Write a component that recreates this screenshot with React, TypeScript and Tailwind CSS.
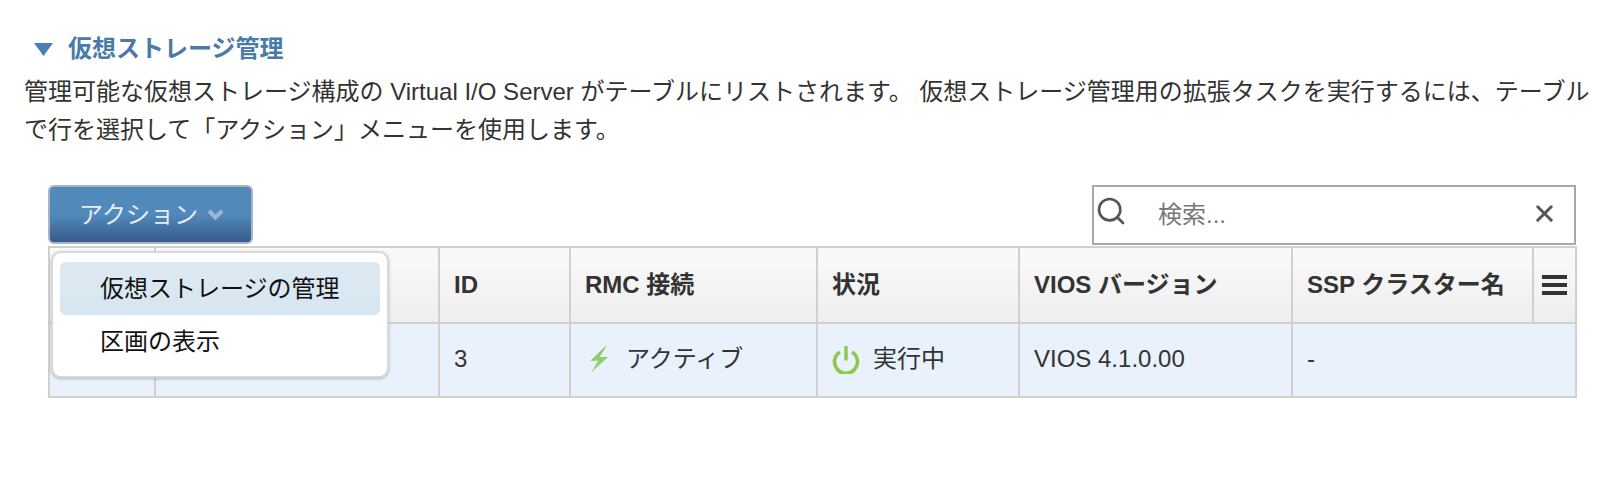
import React from 'react';
import { Search, X } from 'lucide-react';

const font = '[font-family:"Liberation_Sans","Noto_Sans_CJK_JP",sans-serif]';

const headers = [
  { label: '', width: 'w-[106px]' },
  { label: '', width: 'w-[284px]' },
  { label: 'ID', width: 'w-[131px]' },
  { label: 'RMC 接続', width: 'w-[247px]' },
  { label: '状況', width: 'w-[202px]' },
  { label: 'VIOS バージョン', width: 'w-[273px]' },
  { label: 'SSP クラスター名', width: 'w-[241px]' },
];

const Bolt = () => (
  <svg width="20" height="28" viewBox="0 0 20 28" className="shrink-0">
    <defs>
      <linearGradient id="bolt" x1="0" y1="0" x2="0" y2="1">
        <stop offset="0%" stopColor="#7cc04a" />
        <stop offset="100%" stopColor="#a6d98a" />
      </linearGradient>
    </defs>
    <path d="M18 0 L1 16 L9 15.5 L2 28 L19 12 L10.5 12 Z" fill="url(#bolt)" />
  </svg>
);

const PowerOn = () => (
  <svg width="28" height="29" viewBox="0 0 28 29" fill="none" className="shrink-0">
    <path d="M8 7 A11.5 11.5 0 1 0 20 7" stroke="#8cc84b" strokeWidth="3.6" />
    <path d="M14 1 V15.5" stroke="#8cc84b" strokeWidth="3.4" />
  </svg>
);

const Cell: React.FC<{ children?: React.ReactNode; span?: number }> = ({ children, span }) => (
  <td colSpan={span} className="border-2 border-[#d0d0d0] px-[14px] pb-[2px] text-[#333] text-[24px] h-[74px]">{children}</td>
);

export default function App() {
  return (
    <div className={`${font} bg-white w-[1613px] h-[480px] pt-[33px] pl-[24px] overflow-hidden`}>
      <div className="flex items-center h-[32px] pl-[10px]">
        <svg width="19" height="13" viewBox="0 0 19 13" className="mr-[15px]">
          <path d="M0 0 H19 L9.5 13 Z" fill="#4681b4" />
        </svg>
        <h2 className="text-[24px] font-bold text-[#4a7aa7] leading-[32px]">仮想ストレージ管理</h2>
      </div>
      <p className="w-[1570px] mt-[8px] text-[24px] leading-[38px] text-[#333]">
        管理可能な仮想ストレージ構成の Virtual I/O Server がテーブルにリストされます。 仮想ストレージ管理用の拡張タスクを実行するには、テーブルで行を選択して「アクション」メニューを使用します。
      </p>

      <div className="relative ml-[24px] mt-[36px] w-[1528px]">
        <div className="flex items-start justify-between h-[61px]">
          <button className="flex items-center justify-center gap-[9px] w-[205px] h-[59px] pl-[2px] pt-[1px] rounded-[6px] border-2 border-[#a9b3c7] bg-[linear-gradient(#5289bb_0%,#5289bb_50%,#365a8b_100%)] text-[24px] text-[#e6eef6]">
            アクション
            <svg width="17" height="12" viewBox="0 0 17 12" fill="none">
              <path d="M2 2 L8.5 8.5 L15 2" stroke="#9db8d4" strokeWidth="4" />
            </svg>
          </button>
          <div className="flex items-center w-[484px] h-[60px] border-2 border-[#a8a8a8] bg-white">
            <Search size={32} strokeWidth={2} className="text-[#555] ml-[1px] mb-[8px] shrink-0" />
            <span className="ml-[31px] flex-1 text-[24px] text-[#777]">検索...</span>
            <X size={27} strokeWidth={2.6} className="text-[#555] mr-[16px] mb-[3px]" />
          </div>
        </div>

        <table className="table-fixed border-collapse w-[1527px]">
          <thead>
            <tr className="bg-[linear-gradient(#fafafa,#eeeeee)]">
              {headers.map((h, i) => (
                <th key={i} className={`${h.width} h-[76px] border-2 border-[#d0d0d0] px-[14px] text-left text-[24px] font-bold text-[#333]`}>
                  {h.label}
                </th>
              ))}
              <th className="w-[43px] border-2 border-[#d0d0d0]">
                <div className="flex flex-col gap-[4px] w-[25px] mx-auto">
                  <span className="h-[4px] bg-[#333]" />
                  <span className="h-[4px] bg-[#333]" />
                  <span className="h-[4px] bg-[#333]" />
                </div>
              </th>
            </tr>
          </thead>
          <tbody>
            <tr className="bg-[#e9f1fc]">
              <Cell />
              <Cell />
              <Cell>3</Cell>
              <Cell>
                <span className="flex items-center gap-[17px] pl-[4px]"><Bolt />アクティブ</span>
              </Cell>
              <Cell>
                <span className="flex items-center gap-[13px]"><PowerOn />実行中</span>
              </Cell>
              <Cell>VIOS 4.1.0.00</Cell>
              <Cell span={2}>-</Cell>
            </tr>
          </tbody>
        </table>

        <div className="absolute left-[3px] top-[66px] w-[338px] h-[127px] rounded-[10px] border-2 border-[#d8d8d8] bg-white shadow-[0_1px_3px_rgba(0,0,0,0.25)] px-[7px] pt-[9px] text-[24px] text-[#111]">
          <div className="flex items-center h-[53px] rounded-[6px] bg-[linear-gradient(#dde9f2,#d7e6f1)] pl-[40px]">仮想ストレージの管理</div>
          <div className="flex items-center h-[54px] pl-[40px]">区画の表示</div>
        </div>
      </div>
    </div>
  );
}
